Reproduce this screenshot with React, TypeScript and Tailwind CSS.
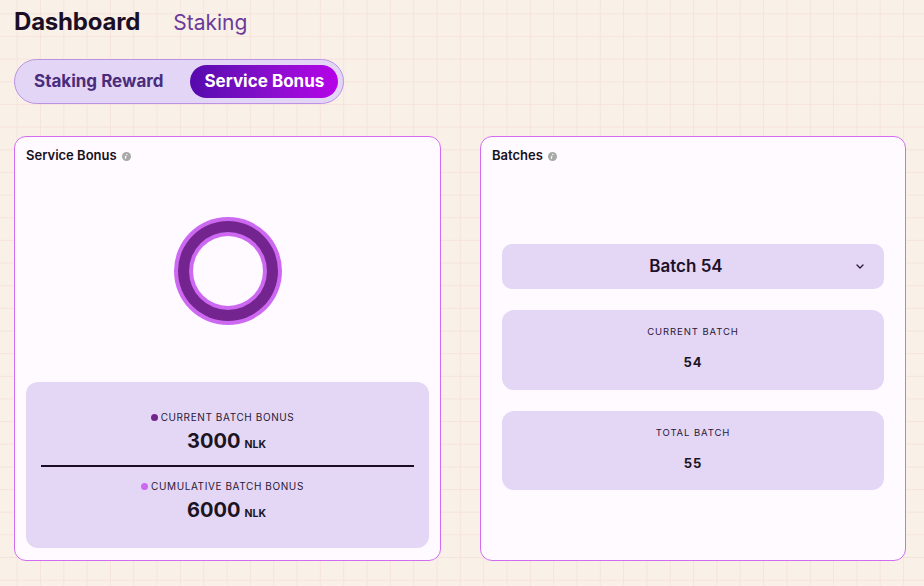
import React from "react";

const font = { fontFamily: "Inter, 'Noto Sans', sans-serif" };

function Info() {
  return (
    <svg width="9" height="9" viewBox="0 0 10 10" className="shrink-0">
      <circle cx="5" cy="5" r="5" fill="#a8a8a8" />
      <rect x="4.4" y="4.2" width="1.3" height="3.6" rx="0.5" fill="#fff" transform="skewX(-10)" />
      <circle cx="5.4" cy="2.8" r="0.75" fill="#fff" />
    </svg>
  );
}

function Donut() {
  return (
    <svg width="110" height="110" viewBox="0 0 110 110">
      <circle cx="55" cy="55" r="54" fill="#cd69f1" />
      <circle cx="55" cy="55" r="50" fill="#74248f" />
      <circle cx="55" cy="55" r="39" fill="#cd69f1" />
      <circle cx="55" cy="55" r="35" fill="#fffaff" />
    </svg>
  );
}

function Stat({ dot, label, value }: { dot: string; label: string; value: string }) {
  return (
    <>
      <div className="flex items-center justify-center gap-[3px] h-[14px] pr-[10px]">
        <span className={`w-[7px] h-[7px] rounded-full ${dot}`} />
        <span className="text-[10px] tracking-[0.6px] text-[#2a1838] leading-[14px]">{label}</span>
      </div>
      <div className="mt-[3px] h-[28px] flex items-baseline justify-center gap-[4px] pr-[2px]">
        <span className="text-[20px] font-bold text-[#1c1422] leading-[28px]">{value}</span>
        <span className="text-[10.5px] font-bold text-[#1c1422]">NLK</span>
      </div>
    </>
  );
}

export default function App() {
  return (
    <div
      className="w-[924px] h-[586px] overflow-hidden bg-[#f9f0e7] px-[14px] pt-[6px]"
      style={{
        ...font,
        backgroundImage:
          "linear-gradient(to right, #f5e4dc 1px, transparent 1px), linear-gradient(to bottom, #f5e4dc 1px, transparent 1px)",
        backgroundSize: "23.33px 22.67px",
        backgroundPosition: "16.6px 13.3px",
      }}
    >
      <div className="flex items-baseline h-[32px]">
        <span className="text-[24px] font-bold text-[#1b0f26] leading-[32px] tracking-[-0.2px]">Dashboard</span>
        <span className="ml-[33px] text-[21px] text-[#6b3a9c] leading-[32px]">Staking</span>
      </div>

      <div className="mt-[21px] inline-flex items-center gap-[13px] h-[45px] rounded-full border border-[#bc93e4] bg-[#e3d5f5] p-[5px]">
        <div className="px-[14px] text-[17px] font-bold text-[#4a2c7c] leading-[33px]">Staking Reward</div>
        <div className="px-[14px] h-[33px] rounded-full bg-gradient-to-r from-[#5609ad] to-[#b600e8] text-[17px] font-bold text-white leading-[33px]">
          Service Bonus
        </div>
      </div>

      <div className="mt-[32px] grid grid-cols-[427px_426px] gap-[39px]">
        <div className="h-[425px] rounded-[12px] border border-[#d36cf1] bg-[#fffaff] px-[11px] pt-[9px] pb-[12px] flex flex-col">
          <div className="flex items-center gap-[5px] h-[20px]">
            <span className="text-[13px] font-semibold text-[#17111c]">Service Bonus</span>
            <Info />
          </div>
          <div className="h-[216px] flex items-center justify-center pb-[6px]">
            <Donut />
          </div>
          <div className="flex-1 rounded-[12px] bg-[#e3d7f5] pt-[28px]">
            <Stat dot="bg-[#74248f]" label="CURRENT BATCH BONUS" value="3000" />
            <div className="mx-[15px] mt-[10px] h-[2px] bg-[#1a0c24]" />
            <div className="mt-[12px]">
              <Stat dot="bg-[#cd69f1]" label="CUMULATIVE BATCH BONUS" value="6000" />
            </div>
          </div>
        </div>

        <div className="h-[425px] rounded-[12px] border border-[#d36cf1] bg-[#fffaff] pt-[9px] flex flex-col">
          <div className="flex items-center gap-[5px] h-[20px] px-[11px]">
            <span className="text-[13px] font-semibold text-[#17111c]">Batches</span>
            <Info />
          </div>
          <div className="mx-[21px] mt-[78px] h-[45px] rounded-[10px] bg-[#e3d7f5] flex items-center pl-[16px] pr-[20px]">
            <span className="flex-1 text-center text-[17px] font-semibold text-[#1e1029]">Batch 54</span>
            <svg width="8" height="5" viewBox="0 0 8 5" className="ml-[2px]">
              <path d="M1 1l3 3 3-3" stroke="#2a1838" strokeWidth="1.3" fill="none" strokeLinecap="round" strokeLinejoin="round" />
            </svg>
          </div>
          <div className="mx-[21px] mt-[21px] h-[80px] rounded-[12px] bg-[#e3d7f5] pt-[15px] flex flex-col items-center">
            <div className="text-[9.5px] tracking-[0.9px] text-[#2a1838] leading-[14px]">CURRENT BATCH</div>
            <div className="mt-[14px] text-[13px] font-bold tracking-[1px] text-[#1c1422] leading-[18px]">54</div>
          </div>
          <div className="mx-[21px] mt-[21px] h-[79px] rounded-[12px] bg-[#e3d7f5] pt-[15px] flex flex-col items-center">
            <div className="text-[9.5px] tracking-[0.9px] text-[#2a1838] leading-[14px]">TOTAL BATCH</div>
            <div className="mt-[14px] text-[13px] font-bold tracking-[1px] text-[#1c1422] leading-[18px]">55</div>
          </div>
        </div>
      </div>
    </div>
  );
}
